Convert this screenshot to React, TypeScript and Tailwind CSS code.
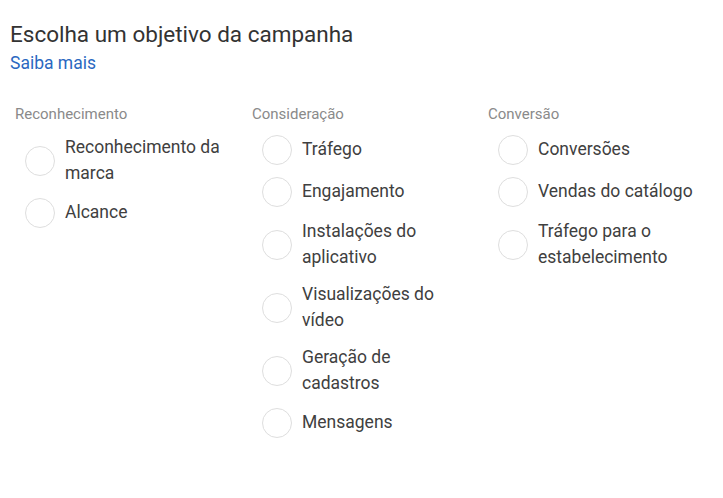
const columns = [
  {
    title: "Reconhecimento",
    items: ["Reconhecimento da marca", "Alcance"],
  },
  {
    title: "Consideração",
    items: [
      "Tráfego",
      "Engajamento",
      "Instalações do aplicativo",
      "Visualizações do vídeo",
      "Geração de cadastros",
      "Mensagens",
    ],
  },
  {
    title: "Conversão",
    items: ["Conversões", "Vendas do catálogo", "Tráfego para o estabelecimento"],
  },
];

export default function App() {
  return (
    <div className="min-h-screen w-[723px] bg-white px-[10px] pt-[20px] font-['Roboto','Liberation_Sans',sans-serif]">
      <h1 className="text-[22.5px] leading-[28px] text-[#333333]">
        Escolha um objetivo da campanha
      </h1>
      <a href="#" className="mt-[3px] block w-fit text-[17.5px] leading-[24px] text-[#2a68c1]">
        Saiba mais
      </a>

      <div className="mt-[29px] grid grid-cols-[237px_236px_230px] pl-[5px]">
        {columns.map((col) => (
          <div key={col.title}>
            <div className="text-[15px] leading-[20px] text-[#8a8a8a]">{col.title}</div>
            <ul className="mt-[11px] flex flex-col gap-[12px]">
              {col.items.map((item) => (
                <li key={item} className="flex items-center gap-[10px] pl-[10px]">
                  <span className="h-[30px] w-[30px] shrink-0 rounded-full border border-[#dedede] bg-white" />
                  <span className="w-[162px] text-[17.5px] leading-[25.5px] text-[#404040]">
                    {item}
                  </span>
                </li>
              ))}
            </ul>
          </div>
        ))}
      </div>
    </div>
  );
}
